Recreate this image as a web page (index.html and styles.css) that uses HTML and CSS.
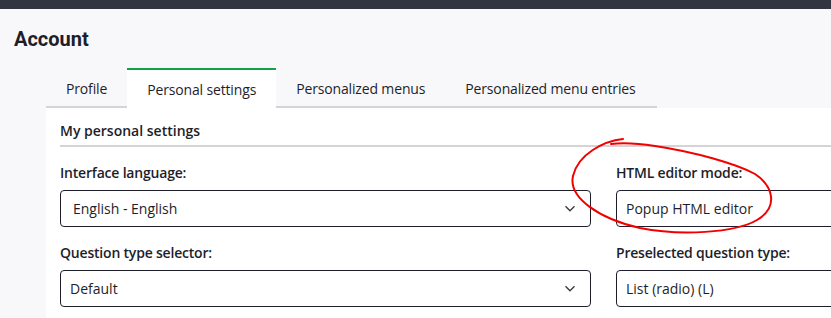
FILE: index.html
```html
<!DOCTYPE html>
<html>
  <head>
    <meta charset="UTF-8" />
    <title>Account</title>
    <link rel="stylesheet" href="styles.css">
  </head>
  <body>
    <div class="topbar"></div>
    <div class="page">
      <h1 class="title">Account</h1>
      <ul class="tabs">
        <li class="tab">Profile</li>
        <li class="tab active">Personal settings</li>
        <li class="tab">Personalized menus</li>
        <li class="tab">Personalized menu entries</li>
      </ul>
      <div class="panel">
        <div class="panel-title">My personal settings</div>
        <div class="form-grid">
          <div class="field">
            <label class="label">Interface language:</label>
            <div class="select wide-pad">
              <span>English - English</span>
              <svg class="chevron" width="12" height="7" viewBox="0 0 12 7"><path d="M1.5 1.2l4.5 4.5 4.5-4.5" fill="none" stroke="#3b3b45" stroke-width="1.4"/></svg>
            </div>
          </div>
          <div class="field">
            <label class="label">HTML editor mode:</label>
            <div class="select">
              <span>Popup HTML editor</span>
            </div>
          </div>
          <div class="field">
            <label class="label">Question type selector:</label>
            <div class="select">
              <span>Default</span>
              <svg class="chevron" width="12" height="7" viewBox="0 0 12 7"><path d="M1.5 1.2l4.5 4.5 4.5-4.5" fill="none" stroke="#3b3b45" stroke-width="1.4"/></svg>
            </div>
          </div>
          <div class="field">
            <label class="label">Preselected question type:</label>
            <div class="select">
              <span>List (radio) (L)</span>
            </div>
          </div>
        </div>
      </div>
    </div>

    <!-- hand drawn annotation -->
    <svg class="annotation" width="831" height="318" viewBox="0 0 831 318">
      <path d="M623 139 C604 141 578 154 573 176 C568 198 600 219 640 228 C680 236 735 233 757 220 C779 207 773 186 755 174 C737 164 695 152 655 146 C635 143 620 143 611 144" fill="none" stroke="#f20000" stroke-width="2" stroke-linecap="round"/>
    </svg>
  </body>
</html>
```
FILE: styles.css
```css
* {
  box-sizing: border-box;
}

body {
  margin: 0;
  background: #f8f8fa;
  color: #1e1e2a;
  font-family: "Open Sans", Arial, sans-serif;
  font-size: 14px;
  overflow: hidden;
  height: 318px;
}

.topbar {
  height: 9px;
  background: #32343f;
}

.page {
  padding: 0 0 0 14px;
}

.title {
  margin: 18px 0 17px;
  font-family: Roboto, Arial, sans-serif;
  font-size: 20px;
  line-height: 24px;
  font-weight: 700;
}

.tabs {
  display: flex;
  list-style: none;
  margin: 0 0 0 32px;
  padding: 0;
  width: 611px;
  height: 40px;
  border-bottom: 2px solid #d4d4d8;
}

.tab {
  height: 38px;
  padding: 0 20px;
  border-top: 2px solid transparent;
  display: flex;
  align-items: center;
  letter-spacing: -0.15px;
  white-space: nowrap;
}

.tab.active {
  height: 40px;
  background: #ffffff;
  border-top-color: #13a24c;
}

.panel {
  margin-left: 32px;
  background: #ffffff;
  padding: 13px 14px 20px;
  min-height: 220px;
  overflow: hidden;
}

.panel-title {
  width: 1087px;
  line-height: 20px;
  font-weight: 600;
  padding-bottom: 4px;
  border-bottom: 2px solid #d4d4d8;
}

.form-grid {
  display: grid;
  grid-template-columns: 531px 531px;
  column-gap: 25px;
  row-gap: 16px;
  padding-top: 16px;
}

.label {
  display: block;
  line-height: 20px;
  font-weight: 600;
  letter-spacing: -0.2px;
  margin-bottom: 7px;
}

.select {
  height: 37px;
  border: 1px solid #1e1e2a;
  border-radius: 4px;
  display: flex;
  align-items: center;
  justify-content: space-between;
  padding: 0 14px 0 9px;
}

.select.wide-pad {
  padding-left: 12px;
}

.chevron {
  display: block;
}

.annotation {
  position: absolute;
  left: 0;
  top: 0;
  pointer-events: none;
}
```
